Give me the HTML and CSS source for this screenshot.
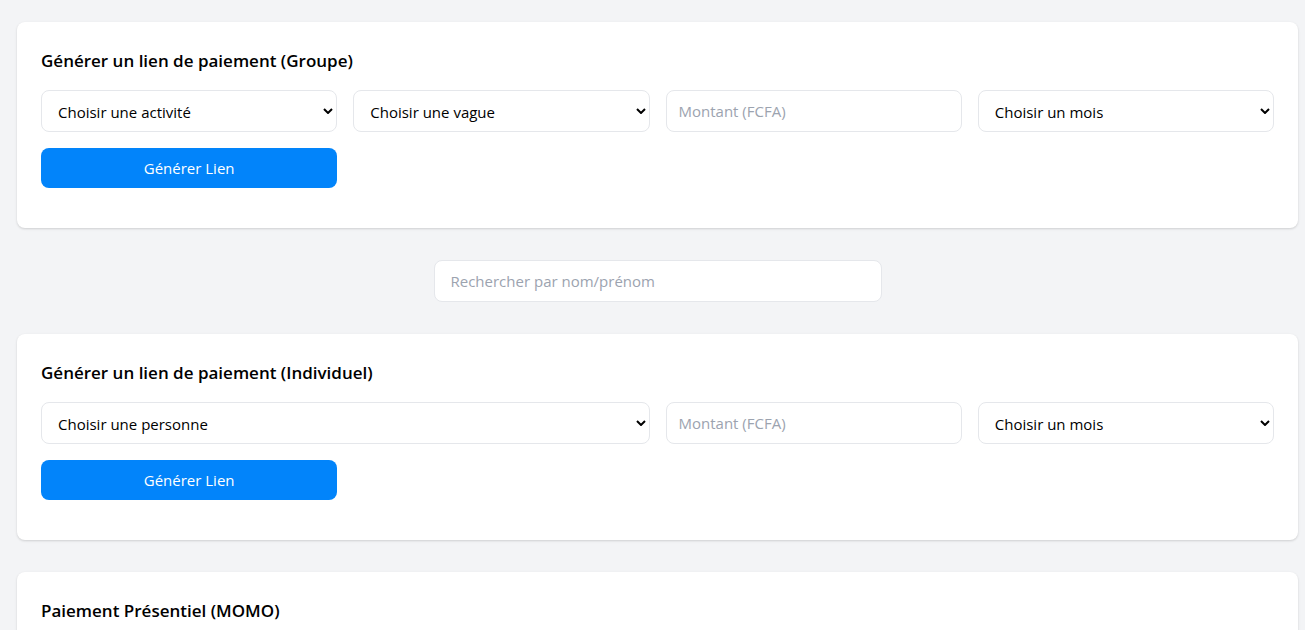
FILE: index.html
```html
<!DOCTYPE html>
<html lang="fr">
<head>
<meta charset="utf-8">
<meta name="viewport" content="width=device-width, initial-scale=1">
<title>Paiements</title>
<link rel="stylesheet" href="styles.css">
</head>
<body>
<main class="page">
  <section class="card">
    <h2 class="card-title">Générer un lien de paiement (Groupe)</h2>
    <form class="form-grid">
      <div class="select-wrap">
        <select class="field select" aria-label="Activité"><option>Choisir une activité</option></select>
        <svg class="chevron" viewBox="0 0 10 6" aria-hidden="true"><path d="M1 1l4 4 4-4"/></svg>
      </div>
      <div class="select-wrap">
        <select class="field select" aria-label="Vague"><option>Choisir une vague</option></select>
        <svg class="chevron" viewBox="0 0 10 6" aria-hidden="true"><path d="M1 1l4 4 4-4"/></svg>
      </div>
      <input class="field" type="text" placeholder="Montant (FCFA)" aria-label="Montant (FCFA)">
      <div class="select-wrap">
        <select class="field select" aria-label="Mois"><option>Choisir un mois</option></select>
        <svg class="chevron" viewBox="0 0 10 6" aria-hidden="true"><path d="M1 1l4 4 4-4"/></svg>
      </div>
      <button class="button" type="button">Générer Lien</button>
    </form>
  </section>

  <input class="field search" type="search" placeholder="Rechercher par nom/prénom" aria-label="Rechercher par nom/prénom">

  <section class="card">
    <h2 class="card-title">Générer un lien de paiement (Individuel)</h2>
    <form class="form-grid">
      <div class="select-wrap wide">
        <select class="field select" aria-label="Personne"><option>Choisir une personne</option></select>
        <svg class="chevron" viewBox="0 0 10 6" aria-hidden="true"><path d="M1 1l4 4 4-4"/></svg>
      </div>
      <input class="field" type="text" placeholder="Montant (FCFA)" aria-label="Montant (FCFA)">
      <div class="select-wrap">
        <select class="field select" aria-label="Mois"><option>Choisir un mois</option></select>
        <svg class="chevron" viewBox="0 0 10 6" aria-hidden="true"><path d="M1 1l4 4 4-4"/></svg>
      </div>
      <button class="button" type="button">Générer Lien</button>
    </form>
  </section>

  <section class="card">
    <h2 class="card-title">Paiement Présentiel (MOMO)</h2>
  </section>
</main>
</body>
</html>
```
FILE: styles.css
```css
* {
  box-sizing: border-box;
}

html {
  scrollbar-width: none;
}

body {
  margin: 0;
  background: #f3f4f6;
  color: #000;
  font-family: "Open Sans", "Noto Sans", sans-serif;
  font-size: 15px;
  line-height: 24px;
}

.page {
  display: flex;
  flex-direction: column;
  gap: 32px;
  padding: 22px 7px 0 17px;
}

.card {
  padding: 24px 24px 40px;
  background: #fff;
  border-radius: 8px;
  box-shadow: 0 1px 3px rgba(0, 0, 0, 0.1), 0 1px 2px rgba(0, 0, 0, 0.06);
}

.card-title {
  margin: 0 0 14px;
  font-size: 17px;
  font-weight: 600;
  line-height: 30px;
}

.form-grid {
  display: grid;
  grid-template-columns: repeat(4, minmax(0, 1fr));
  gap: 16px;
}

.field {
  display: block;
  width: 100%;
  height: 42px;
  padding: 8px 12px;
  background: #fff;
  border: 1px solid #e5e7eb;
  border-radius: 8px;
  color: #000;
  font: inherit;
}

.field::placeholder {
  color: #9ca3af;
  opacity: 1;
}

.select-wrap {
  position: relative;
}

.wide {
  grid-column: span 2;
}

.select {
  padding: 9px 16px 7px;
  appearance: none;
}

.chevron {
  position: absolute;
  top: 18px;
  right: 4px;
  width: 10px;
  height: 6px;
  fill: none;
  stroke: #000;
  stroke-width: 2;
  pointer-events: none;
}

.button {
  height: 40px;
  padding: 8px 16px;
  background: #0284fa;
  border: 0;
  border-radius: 8px;
  color: #fff;
  font: inherit;
}

.search {
  align-self: center;
  width: 100%;
  max-width: 448px;
  padding: 8px 16px;
  appearance: none;
}
```
